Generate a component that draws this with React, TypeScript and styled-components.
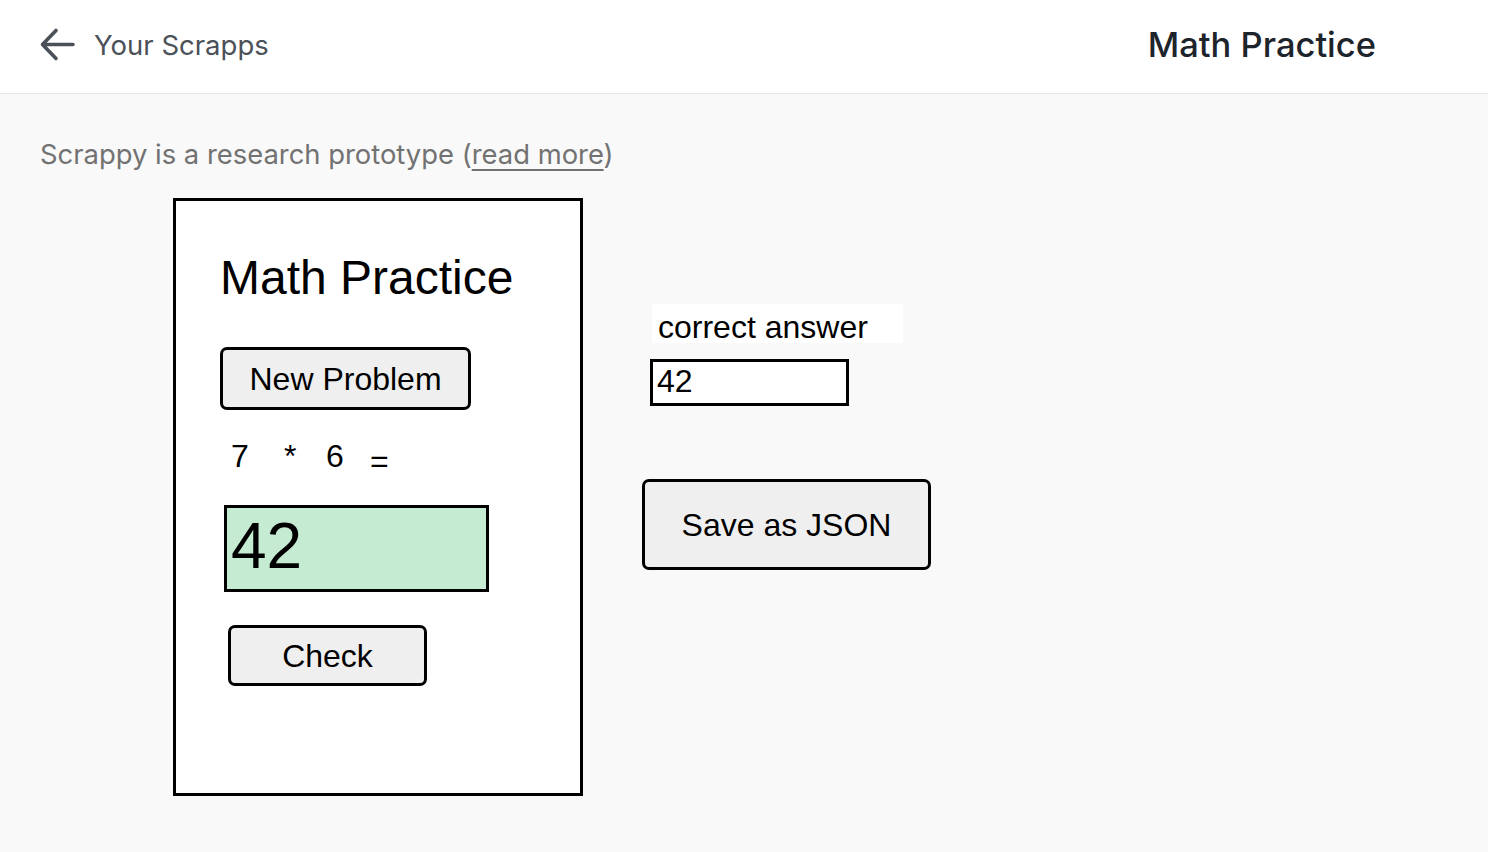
import React from "react";
import styled, { createGlobalStyle } from "styled-components";

const Global = createGlobalStyle`
  html, body { margin: 0; padding: 0; }
  body {
    background: #f9f9f9;
    font-family: Inter, "Noto Sans", sans-serif;
    width: 1488px;
    height: 852px;
    overflow: hidden;
  }
  * { box-sizing: border-box; }
`;

const Page = styled.div`
  display: flex;
  flex-direction: column;
  height: 852px;
`;

const Header = styled.header`
  height: 94px;
  flex: none;
  background: #ffffff;
  border-bottom: 1px solid #e4e4e4;
  display: flex;
  align-items: center;
  justify-content: space-between;
  padding: 0 112px 4px 39px;
`;

const BackLink = styled.a`
  display: flex;
  align-items: center;
  gap: 19px;
  color: #4b5158;
  font-size: 27.5px;
  text-decoration: none;
  cursor: pointer;
`;

const Title = styled.h1`
  margin: 0;
  font-size: 34.5px;
  font-weight: 500;
  color: #1e242b;
`;

/* Workspace: the notice sits in flow, the scrap items float on the free canvas */
const Workspace = styled.main`
  position: relative;
  flex: 1;
`;

const Notice = styled.p`
  margin: 44px 0 0 40px;
  font-size: 27.4px;
  color: #727272;
  line-height: 1.2;
`;

const NoticeLink = styled.a`
  color: inherit;
  text-decoration: underline;
  text-underline-offset: 5px;
  text-decoration-thickness: 2px;
`;

const Scrap = styled.div<{ $x: number; $y: number }>`
  position: absolute;
  left: ${(p) => p.$x}px;
  top: ${(p) => p.$y}px;
  font-family: "Liberation Sans", Arial, sans-serif;
  color: #000;
`;

const Frame = styled.div`
  width: 410px;
  height: 598px;
  background: #fff;
  border: 3px solid #000;
  padding: 53px 0 0 44px;
  display: flex;
  flex-direction: column;
  align-items: flex-start;
`;

const FrameTitle = styled.div`
  font-size: 48px;
  line-height: 1;
  white-space: nowrap;
`;

const Button = styled.button<{ $w: number; $h: number }>`
  width: ${(p) => p.$w}px;
  height: ${(p) => p.$h}px;
  border: 3px solid #000;
  border-radius: 7px;
  background: #efefef;
  font-family: "Liberation Sans", Arial, sans-serif;
  font-size: 32px;
  line-height: 1;
  color: #000;
  padding: 0;
  display: flex;
  align-items: center;
  justify-content: center;
  cursor: pointer;
`;

const NewProblemSlot = styled.div`
  margin: 45px 0 0 0;
`;

const Equation = styled.div`
  margin: 30px 0 0 11px;
  display: grid;
  grid-template-columns: 53px 42px 44px auto;
  align-items: start;
  font-size: 32px;
  line-height: 1;
  height: 32px;
`;

const EqualSign = styled.span`
  padding-top: 5px;
`;

const AnswerBox = styled.div`
  margin: 33px 0 0 4px;
  width: 265px;
  height: 87px;
  border: 3px solid #000;
  background: #c5ecd2;
  font-size: 64px;
  line-height: 1;
  padding: 6px 0 0 4px;
`;

const CheckSlot = styled.div`
  margin: 33px 0 0 8px;
`;

const Label = styled.div`
  width: 251px;
  height: 39px;
  background: #fff;
  font-size: 32px;
  line-height: 1;
  padding: 7px 0 0 6px;
  white-space: nowrap;
`;

const SmallBox = styled.div`
  width: 199px;
  height: 47px;
  border: 3px solid #000;
  background: #fff;
  font-size: 32px;
  line-height: 1;
  padding: 3px 0 0 4px;
`;

const ArrowIcon = () => (
  <svg width="36" height="36" viewBox="0 0 36 36" fill="none">
    <path
      d="M34 17.5H4.5M17 3.5L3.5 17.5L17 31.5"
      stroke="#4b5158"
      strokeWidth="3.6"
      strokeLinecap="round"
      strokeLinejoin="round"
    />
  </svg>
);

export default function App() {
  return (
    <>
      <Global />
      <Page>
        <Header>
          <BackLink>
            <ArrowIcon />
            <span>Your Scrapps</span>
          </BackLink>
          <Title>Math Practice</Title>
        </Header>
        <Workspace>
          <Notice>
            Scrappy is a research prototype (<NoticeLink>read more</NoticeLink>)
          </Notice>
          <Scrap $x={173} $y={104}>
            <Frame>
              <FrameTitle>Math Practice</FrameTitle>
              <NewProblemSlot>
                <Button $w={251} $h={63}>New Problem</Button>
              </NewProblemSlot>
              <Equation>
                <span>7</span>
                <span>*</span>
                <span>6</span>
                <EqualSign>=</EqualSign>
              </Equation>
              <AnswerBox>42</AnswerBox>
              <CheckSlot>
                <Button $w={199} $h={61}>Check</Button>
              </CheckSlot>
            </Frame>
          </Scrap>
          <Scrap $x={652} $y={210}>
            <Label>correct answer</Label>
          </Scrap>
          <Scrap $x={650} $y={265}>
            <SmallBox>42</SmallBox>
          </Scrap>
          <Scrap $x={642} $y={385}>
            <Button $w={289} $h={91}>Save as JSON</Button>
          </Scrap>
        </Workspace>
      </Page>
    </>
  );
}
